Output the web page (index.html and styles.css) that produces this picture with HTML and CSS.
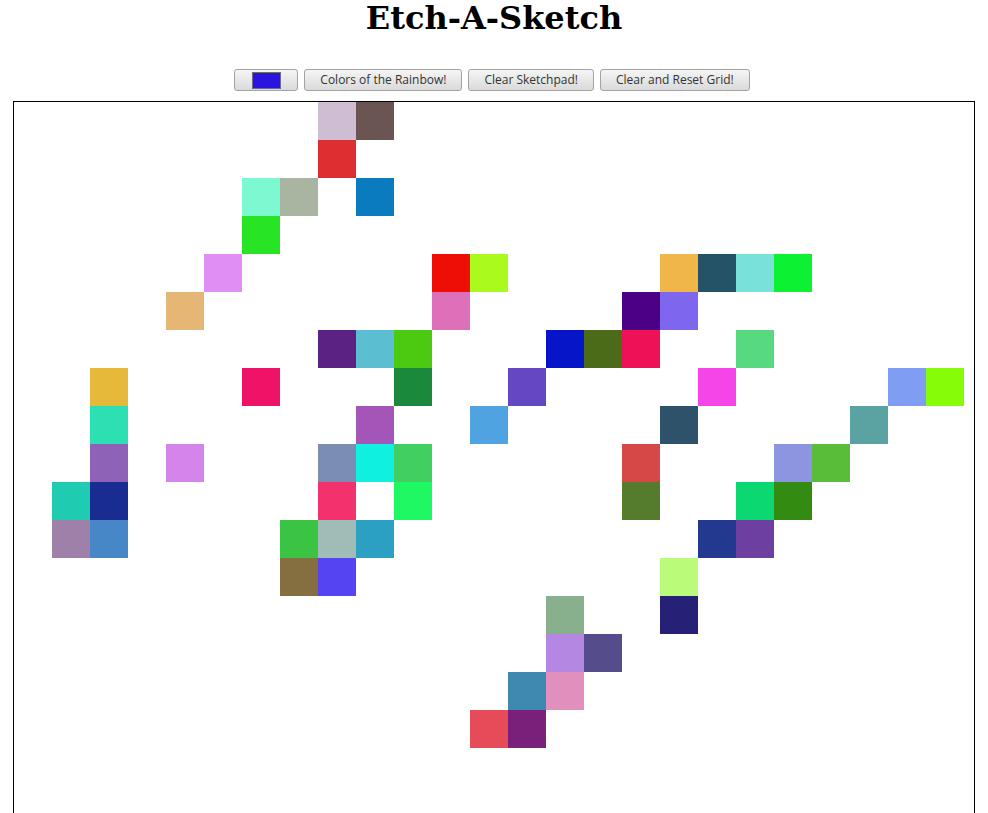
FILE: index.html
```html
<!DOCTYPE html>
<html lang="en">
<head>
<meta charset="utf-8">
<title>Etch-A-Sketch</title>
<link rel="stylesheet" href="styles.css">
</head>
<body>
<h1 class="title">Etch-A-Sketch</h1>
<div class="controls">
  <button class="btn color-btn" type="button"><span class="swatch"></span></button>
  <button class="btn" type="button">Colors of the Rainbow!</button>
  <button class="btn" type="button">Clear Sketchpad!</button>
  <button class="btn" type="button">Clear and Reset Grid!</button>
</div>
<div class="pad" id="pad"></div>
<script src="script.js"></script>
</body>
</html>
```
FILE: styles.css
```css
html, body {
  margin: 0;
  padding: 0;
  background: #ffffff;
}

.title {
  margin: 0;
  font-family: "DejaVu Serif", serif;
  font-weight: bold;
  font-size: 32px;
  line-height: 37px;
  text-align: center;
  color: #000000;
}

.controls {
  display: flex;
  justify-content: center;
  gap: 6px;
  margin-top: 32px;
  padding-right: 4px;
  height: 22px;
}

.btn {
  height: 22px;
  margin: 0;
  padding: 0 15px;
  border: 1px solid #a3a3a3;
  border-radius: 3px;
  background: linear-gradient(#f5f5f5, #dadada);
  font-family: "Open Sans", "Noto Sans", sans-serif;
  font-size: 12px;
  color: #333333;
  line-height: 20px;
  box-sizing: border-box;
}

.color-btn {
  width: 64px;
  padding: 0;
  display: flex;
  align-items: center;
  justify-content: center;
}

.swatch {
  display: block;
  width: 29px;
  height: 17px;
  background: #2a14e0;
  border: 1px solid #6c6c8a;
  box-sizing: border-box;
}

.pad {
  width: 960px;
  height: 960px;
  margin: 10px auto 0;
  border: 1px solid #000000;
  display: grid;
  grid-template-columns: repeat(25, 38px);
  grid-template-rows: repeat(25, 38px);
  align-content: start;
}

.cell {
  width: 38px;
  height: 38px;
  background: #ffffff;
}
```
FILE: script.js
```js
(function () {
  var painted = [
    [0, 8, "#cfbdd4"], [0, 9, "#6a5553"],
    [1, 8, "#df2e32"],
    [2, 6, "#7cf9d0"], [2, 7, "#a9b5a1"], [2, 9, "#0b7bbf"],
    [3, 6, "#27e524"],
    [4, 5, "#e08ef3"], [4, 11, "#ee0e05"], [4, 12, "#aafa1e"], [4, 17, "#f0b64a"], [4, 18, "#245266"], [4, 19, "#7ae1d9"], [4, 20, "#0cf131"],
    [5, 4, "#e5b674"], [5, 11, "#de6fb9"], [5, 16, "#4b0086"], [5, 17, "#7e66ef"],
    [6, 8, "#5b2284"], [6, 9, "#5bbfd1"], [6, 10, "#4cc911"], [6, 14, "#0615c8"], [6, 15, "#4c6b18"], [6, 16, "#ef1157"], [6, 19, "#57da7f"],
    [7, 2, "#e6b93a"], [7, 6, "#ef1367"], [7, 10, "#1a893b"], [7, 13, "#6447c3"], [7, 18, "#f544e8"], [7, 23, "#7f9ef3"], [7, 24, "#87fc08"],
    [8, 2, "#2de0b4"], [8, 9, "#a356b8"], [8, 12, "#4fa3e0"], [8, 17, "#2e5269"], [8, 22, "#5ba2a2"],
    [9, 2, "#8e63b7"], [9, 4, "#d584ec"], [9, 8, "#7b8db3"], [9, 9, "#0ff0e0"], [9, 10, "#41cf61"], [9, 16, "#d64747"], [9, 20, "#8e95e0"], [9, 21, "#5abd39"],
    [10, 1, "#1fcbb1"], [10, 2, "#182c92"], [10, 8, "#f3326d"], [10, 10, "#1ff863"], [10, 16, "#557b2d"], [10, 19, "#0cd871"], [10, 20, "#348b12"],
    [11, 1, "#9e80a9"], [11, 2, "#4787c8"], [11, 7, "#3bc444"], [11, 8, "#9fbdb6"], [11, 9, "#2ba0c3"], [11, 18, "#22398f"], [11, 19, "#6c3fa0"],
    [12, 7, "#856e3f"], [12, 8, "#5544f1"], [12, 17, "#bafb7a"],
    [13, 14, "#88b08c"], [13, 17, "#262176"],
    [14, 14, "#b488e2"], [14, 15, "#544c8b"],
    [15, 13, "#3e89b0"], [15, 14, "#e190be"],
    [16, 12, "#e64b5a"], [16, 13, "#7a1f7a"]
  ];
  var map = {};
  painted.forEach(function (p) { map[p[0] + "," + p[1]] = p[2]; });
  var pad = document.getElementById("pad");
  var frag = document.createDocumentFragment();
  for (var r = 0; r < 25; r++) {
    for (var c = 0; c < 25; c++) {
      var d = document.createElement("div");
      d.className = "cell";
      var col = map[r + "," + c];
      if (col) d.style.backgroundColor = col;
      frag.appendChild(d);
    }
  }
  pad.appendChild(frag);
})();
```
